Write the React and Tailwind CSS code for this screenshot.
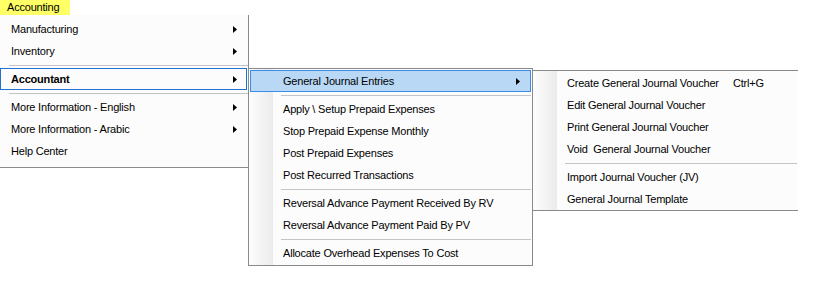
import React from 'react';

const font = { fontFamily: '"Liberation Sans", Arial, sans-serif' };

function Arrow() {
  return (
    <svg width="4" height="7" viewBox="0 0 4 7" className="shrink-0">
      <path d="M0 0L4 3.5L0 7Z" fill="#000" />
    </svg>
  );
}

function Sep({ className = '' }) {
  return (
    <div className={`h-[6px] flex items-center ${className}`}>
      <div className="h-px w-full bg-[#c4c4c4]" />
    </div>
  );
}

// top-level dropdown row
function TopItem({ label, sub, active, bold }) {
  return (
    <div
      className={`h-[22px] mr-[1px] flex items-center justify-between pl-[10px] pr-[9px] border ${
        active ? 'border-[#1f74d0]' : 'border-transparent'
      } ${bold ? 'font-bold' : ''}`}
    >
      <span>{label}</span>
      {sub && <Arrow />}
    </div>
  );
}

// submenu row
function SubItem({ label, sub, active, shortcut }) {
  return (
    <div
      className={`h-[22px] mx-[1px] flex items-center pl-[32px] pr-[10px] border whitespace-pre ${
        active ? 'border-[#3a8ee6] bg-[#b9d8f5]' : 'border-transparent'
      }`}
    >
      <span className={shortcut ? 'w-[166px]' : 'flex-1'}>{label}</span>
      {shortcut && <span>{shortcut}</span>}
      {sub && <Arrow />}
    </div>
  );
}

export default function App() {
  return (
    <div
      className="relative w-[814px] h-[284px] bg-white text-black text-[11px] tracking-[-0.2px] overflow-hidden"
      style={font}
    >
      {/* menu bar tab */}
      <div className="w-[70px] h-[15px] bg-[#ffff66] pl-[7px] leading-[15px]">Accounting</div>

      {/* main dropdown */}
      <div className="absolute left-0 top-[15px] w-[249px] bg-[#fcfcfc] border-r border-b border-[#8a8a8a] pt-[3px] pb-[5px]">
        <TopItem label="Manufacturing" sub />
        <TopItem label="Inventory" sub />
        <Sep className="ml-[9px]" />
        <TopItem label="Accountant" sub active bold />
        <Sep className="ml-[9px]" />
        <TopItem label="More Information - English" sub />
        <TopItem label="More Information - Arabic" sub />
        <TopItem label="Help Center" />
      </div>

      {/* Accountant submenu */}
      <div className="absolute left-[248px] top-[68px] w-[285px] border border-[#8a8a8a] pt-[1px] pb-[1px] bg-[linear-gradient(to_right,#fdfdfd_0px,#ebebeb_24px,#fcfcfc_24px)]">
        <SubItem label="General Journal Entries" sub active />
        <Sep className="ml-[32px] mr-[1px]" />
        <SubItem label="Apply \ Setup Prepaid Expenses" />
        <SubItem label="Stop Prepaid Expense Monthly" />
        <SubItem label="Post Prepaid Expenses" />
        <SubItem label="Post Recurred Transactions" />
        <Sep className="ml-[32px] mr-[1px]" />
        <SubItem label="Reversal Advance Payment Received By RV" />
        <SubItem label="Reversal Advance Payment Paid By PV" />
        <Sep className="ml-[32px] mr-[1px]" />
        <SubItem label="Allocate Overhead Expenses To Cost" />
      </div>

      {/* General Journal Entries submenu */}
      <div className="absolute left-[532px] top-[70px] w-[266px] border-l border-t border-b border-[#8a8a8a] pt-[1px] bg-[linear-gradient(to_right,#fdfdfd_0px,#ebebeb_24px,#fcfcfc_24px)]">
        <SubItem label="Create General Journal Voucher" shortcut="Ctrl+G" />
        <SubItem label="Edit General Journal Voucher" />
        <SubItem label="Print General Journal Voucher" />
        <SubItem label="Void  General Journal Voucher" />
        <Sep className="ml-[32px] mr-[1px]" />
        <SubItem label="Import Journal Voucher (JV)" />
        <SubItem label="General Journal Template" />
      </div>
    </div>
  );
}
